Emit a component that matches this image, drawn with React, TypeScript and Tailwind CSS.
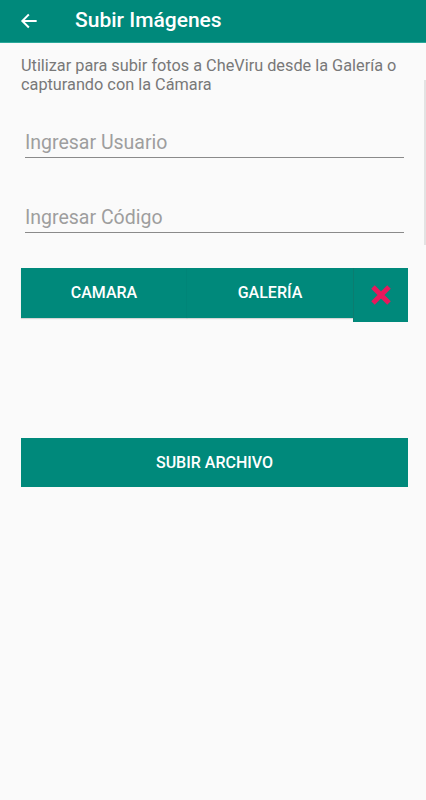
import { useState } from "react";

const font = { fontFamily: "Roboto, 'Liberation Sans', sans-serif" };

const BackArrow = () => (
  <svg width="20" height="20" viewBox="0 0 24 24" fill="none" stroke="white" strokeWidth="2.4" strokeLinecap="square">
    <path d="M20 12H5" />
    <path d="M11 5l-7 7 7 7" />
  </svg>
);

const Field = ({ placeholder }: { placeholder: string }) => {
  const [value, setValue] = useState("");
  return (
    <input
      value={value}
      onChange={(e) => setValue(e.target.value)}
      placeholder={placeholder}
      className="w-full h-[30px] bg-transparent border-b-[1.5px] border-[#8a8a8a] text-[19.5px] text-[#212121] placeholder:text-[#9e9e9e] outline-none"
      style={font}
    />
  );
};

export default function App() {
  return (
    <div className="min-h-[800px] bg-[#fafafa] relative" style={font}>
      {/* app bar */}
      <div className="h-[43px] bg-[#00897b] flex items-center pl-[19px] border-b border-[#2aa89a]">
        <BackArrow />
        <span className="ml-[36px] text-white text-[21px] font-medium">Subir Imágenes</span>
      </div>

      {/* scrollbar hint */}
      <div className="absolute right-0 top-[80px] w-[2px] h-[165px] bg-[#e3e3e3]" />

      <p className="ml-[21px] mr-[18px] mt-[13px] text-[16.3px] leading-[19px] text-[#787878]">
        Utilizar para subir fotos a CheViru desde la Galería o capturando con la Cámara
      </p>

      <div className="ml-[25px] mt-[34px] w-[379px]">
        <Field placeholder="Ingresar Usuario" />
      </div>
      <div className="ml-[25px] mt-[45px] w-[379px]">
        <Field placeholder="Ingresar Código" />
      </div>

      <div className="ml-[21px] mt-[35px] flex items-start">
        <button className="shrink-0 w-[166px] h-[50px] bg-[#00897b] text-white text-[16px] font-medium shadow-[0_1px_1px_rgba(0,0,0,0.15)]">
          CAMARA
        </button>
        <button className="shrink-0 w-[166px] h-[50px] bg-[#00897b] text-white text-[16px] font-medium shadow-[0_1px_1px_rgba(0,0,0,0.15)]">
          GALERÍA
        </button>
        <button className="shrink-0 w-[55px] h-[54px] bg-[#00897b] flex items-center justify-center border-l border-[#0b7d70]">
          <svg width="22" height="22" viewBox="0 0 22 22">
            <path d="M3 3L19 19M19 3L3 19" stroke="#e8185c" strokeWidth="5" strokeLinecap="butt" />
          </svg>
        </button>
      </div>

      <div className="ml-[21px] mr-[18px] mt-[116px]">
        <button className="w-full h-[49px] bg-[#00897b] text-white text-[16px] font-medium">
          SUBIR ARCHIVO
        </button>
      </div>
    </div>
  );
}
